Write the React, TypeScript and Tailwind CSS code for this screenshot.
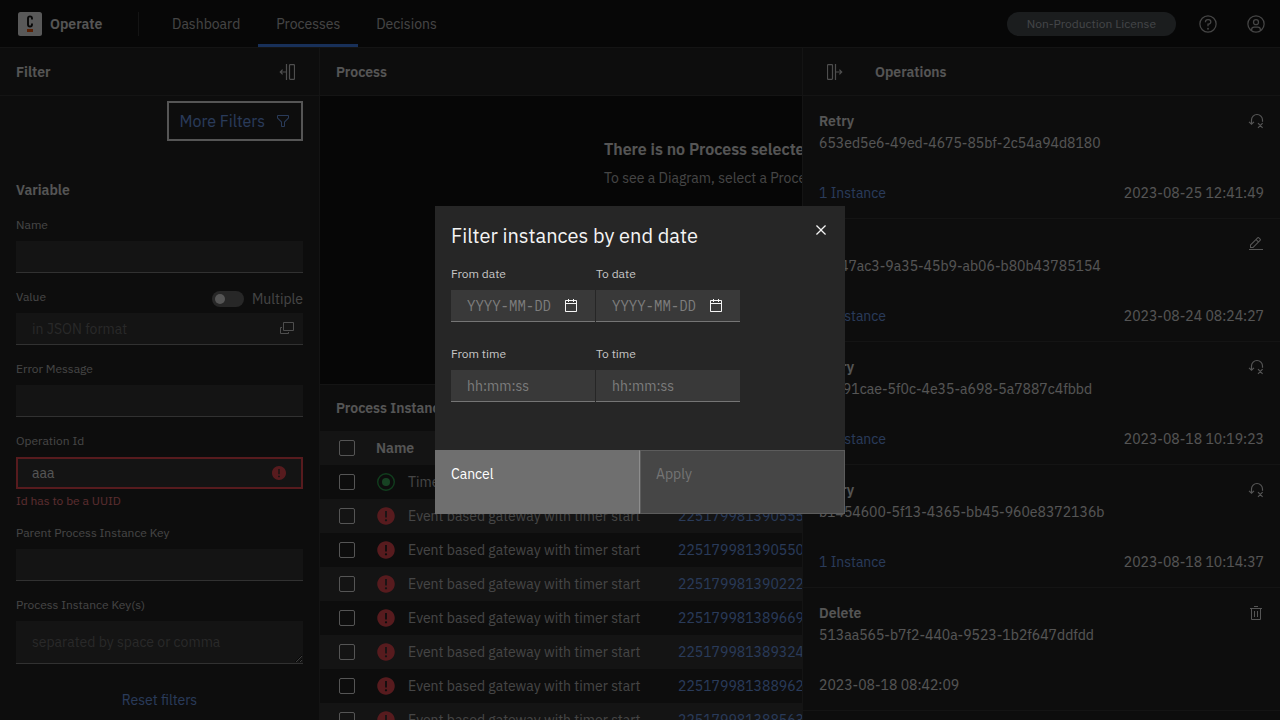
import type { ReactNode } from "react";

type IconProps = { className?: string };

function CloseIcon({ className }: IconProps) {
  return (
    <svg className={className} viewBox="0 0 32 32" fill="currentColor" aria-hidden="true">
      <path d="M17.4141 16 24 9.4141 22.5859 8 16 14.5859 9.4143 8 8 9.4141 14.5859 16 8 22.5859 9.4143 24 16 17.4141 22.5859 24 24 22.5859 17.4141 16z" />
    </svg>
  );
}

function CalendarIcon({ className }: IconProps) {
  return (
    <svg className={className} viewBox="0 0 32 32" fill="currentColor" aria-hidden="true">
      <path d="M26,4h-4V2h-2v2h-8V2h-2v2H6C4.9,4,4,4.9,4,6v20c0,1.1,0.9,2,2,2h20c1.1,0,2-0.9,2-2V6C28,4.9,27.1,4,26,4z M26,26H6V12h20V26z M26,10H6V6h4v2h2V6h8v2h2V6h4V10z" />
    </svg>
  );
}

function FilterIcon({ className }: IconProps) {
  return (
    <svg className={className} viewBox="0 0 32 32" fill="currentColor" aria-hidden="true">
      <path d="M18,28H14a2,2,0,0,1-2-2V18.41L4.59,11A2,2,0,0,1,4,9.59V6A2,2,0,0,1,6,4H26a2,2,0,0,1,2,2V9.59A2,2,0,0,1,27.41,11L20,18.41V26A2,2,0,0,1,18,28ZM6,6V9.59l8,8V26h4V17.59l8-8V6Z" />
    </svg>
  );
}

function HelpIcon({ className }: IconProps) {
  return (
    <svg className={className} viewBox="0 0 32 32" fill="currentColor" aria-hidden="true">
      <path d="M16,2A14,14,0,1,0,30,16,14,14,0,0,0,16,2Zm0,26A12,12,0,1,1,28,16,12,12,0,0,1,16,28Z" />
      <circle cx="16" cy="23.5" r="1.5" />
      <path d="M17,8H15.5A4.49,4.49,0,0,0,11,12.5V13h2v-.5A2.5,2.5,0,0,1,15.5,10H17a2.5,2.5,0,0,1,0,5H15v4.5h2V17a4.5,4.5,0,0,0,0-9Z" />
    </svg>
  );
}

function UserIcon({ className }: IconProps) {
  return (
    <svg className={className} viewBox="0 0 32 32" fill="currentColor" aria-hidden="true">
      <path d="M16,8a5,5,0,1,0,5,5A5,5,0,0,0,16,8Zm0,8a3,3,0,1,1,3-3A3.0034,3.0034,0,0,1,16,16Z" />
      <path d="M16,2A14,14,0,1,0,30,16,14.0158,14.0158,0,0,0,16,2ZM10,26.3765V25a3.0033,3.0033,0,0,1,3-3h6a3.0033,3.0033,0,0,1,3,3v1.3765a11.8989,11.8989,0,0,1-12,0Zm13.9925-1.4507A5.0016,5.0016,0,0,0,19,20H13a5.0016,5.0016,0,0,0-4.9925,4.9258,12,12,0,1,1,15.985,0Z" />
    </svg>
  );
}

function EditIcon({ className }: IconProps) {
  return (
    <svg className={className} viewBox="0 0 32 32" fill="currentColor" aria-hidden="true">
      <path d="M2 26H30V28H2z" />
      <path d="M25.4,9c0.8-0.8,0.8-2,0-2.8c0,0,0,0,0,0l-3.6-3.6c-0.8-0.8-2-0.8-2.8,0c0,0,0,0,0,0l-15,15V24h6.4L25.4,9z M20.4,4L24,7.6l-3,3L17.4,7L20.4,4z M6,22v-3.6l10-10l3.6,3.6l-10,10H6z" />
    </svg>
  );
}

function TrashIcon({ className }: IconProps) {
  return (
    <svg className={className} viewBox="0 0 32 32" fill="currentColor" aria-hidden="true">
      <path d="M12 12H14V24H12zM18 12H20V24H18zM4 6V8H6V28a2 2 0 0 0 2 2H24a2 2 0 0 0 2-2V8h2V6ZM8 28V8H24V28ZM12 2H20V4H12z" />
    </svg>
  );
}

function RetryIcon({ className }: IconProps) {
  return (
    <svg className={className} viewBox="0 0 16 16" fill="none" stroke="currentColor" strokeWidth="1.15" aria-hidden="true">
      <path d="M3.5 11V7A5.5 5.5 0 0 1 14.5 7V8.8" />
      <path d="M1 8.8 3.5 11.2 6 8.8M10 10.2l4.6 4.6M14.6 10.2 10 14.8" />
    </svg>
  );
}

function CollapseIcon({ className }: IconProps) {
  return (
    <svg className={className} viewBox="0 0 16 16" fill="none" stroke="currentColor" strokeWidth="1.2" aria-hidden="true">
      <path d="M7.5 0v16M7.5 8H1.5M3.6 5.7 1.3 8l2.3 2.3" />
      <rect x="10.5" y="0.6" width="5" height="14.8" rx="0.8" />
    </svg>
  );
}

function PopupIcon({ className }: IconProps) {
  return (
    <svg className={className} viewBox="0 0 16 16" fill="none" stroke="currentColor" aria-hidden="true">
      <path d="M4.5 1.5h10v8h-10zM3 6.5H1.5v6h8V11" />
    </svg>
  );
}

function ErrorIcon({ className }: IconProps) {
  return (
    <svg className={className} viewBox="0 0 16 16" fill="currentColor" fillRule="evenodd" aria-hidden="true">
      <path d="M8,1C4.2,1,1,4.2,1,8s3.2,7,7,7s7-3.1,7-7S11.8,1,8,1z M7.3,4h1.4v5.2h-1.4z M8,12.3c-0.5,0-0.9-0.4-0.9-0.9s0.4-0.9,0.9-0.9c0.5,0,0.9,0.4,0.9,0.9S8.5,12.3,8,12.3z" />
    </svg>
  );
}

function ActiveIcon({ className }: IconProps) {
  return (
    <svg className={className} viewBox="0 0 20 20" aria-hidden="true">
      <circle cx="10" cy="10" r="8.3" fill="none" stroke="#30b054" strokeWidth="1.4" />
      <circle cx="10" cy="10" r="4" fill="#42be65" />
    </svg>
  );
}

function Logo() {
  return (
    <svg className="size-6" viewBox="0 0 24 24" aria-hidden="true">
      <rect width="24" height="24" rx="2.5" fill="#ffffff" />
      <path d="M14 7.6V6.4a2 2 0 0 0-4 0v6.2a2 2 0 0 0 4 0v-1.2" fill="none" stroke="#161616" strokeWidth="1.9" />
      <rect x="9" y="17" width="6" height="3" fill="#fc5d0d" />
    </svg>
  );
}

const fieldClass = "block h-8 w-full border-b border-[#8d8d8d] bg-[#393939] px-4 text-sm text-[#f4f4f4] outline-none placeholder:text-[#757575]";
const labelClass = "block text-xs leading-4 text-[#c6c6c6]";

function Field({ id, label }: { id: string; label: string }) {
  return (
    <div className="flex flex-col gap-2">
      <label htmlFor={id} className={labelClass}>{label}</label>
      <input id={id} type="text" className={fieldClass} />
    </div>
  );
}

function Header() {
  const links = [
    { label: "Dashboard", active: false },
    { label: "Processes", active: true },
    { label: "Decisions", active: false },
  ];
  return (
    <header className="flex h-12 shrink-0 items-center border-b border-[#393939] bg-[#161616]">
      <a href="#home" className="flex w-[138px] items-center gap-2 pl-[18px] text-sm font-semibold">
        <Logo />
        Operate
      </a>
      <nav className="flex h-full items-center">
        <div className="mr-[15px] h-6 w-px bg-[#393939]" />
        {links.map(({ label, active }) => (
          <a
            key={label}
            href={`#${label.toLowerCase()}`}
            className={`flex h-full items-center border-y-[3px] border-t-transparent px-[18px] text-sm text-[#c6c6c6] ${active ? "border-b-[#4589ff]" : "border-b-transparent"}`}
          >
            {label}
          </a>
        ))}
      </nav>
      <div className="ml-auto flex items-center">
        <span className="mr-2 flex h-6 items-center rounded-full bg-[#4d5358] px-5 text-xs text-[#c1c7cd]">Non-Production License</span>
        <button type="button" aria-label="Help" className="grid size-12 place-items-center text-[#c6c6c6]"><HelpIcon className="size-5" /></button>
        <button type="button" aria-label="Account" className="grid size-12 place-items-center text-[#c6c6c6]"><UserIcon className="size-5" /></button>
      </div>
    </header>
  );
}

function FilterPanel() {
  return (
    <aside className="flex w-80 shrink-0 flex-col overflow-hidden border-r border-[#393939]">
      <div className="flex h-12 shrink-0 items-center justify-between border-b border-[#393939] pl-4 pr-6">
        <h2 className="text-sm font-semibold">Filter</h2>
        <button type="button" aria-label="Collapse filter" className="text-[#e0e0e0]"><CollapseIcon className="size-4" /></button>
      </div>
      <form className="flex flex-col px-4 pt-[5px]">
        <button type="button" className="flex h-10 items-center gap-2.5 self-end border-2 border-[#f4f4f4] px-2.5 text-base text-[#78a9ff]">
          More Filters
          <FilterIcon className="size-4" />
        </button>
        <h3 className="mt-10 text-sm leading-[18px] font-semibold">Variable</h3>
        <div className="mt-[18px] flex flex-col gap-4">
          <Field id="name" label="Name" />
          <div className="flex flex-col gap-2">
            <div className="flex h-4 items-center justify-between">
              <label htmlFor="value" className={labelClass}>Value</label>
              <label className="flex items-center gap-2 pt-1 text-sm text-[#c6c6c6]">
                <input
                  type="checkbox"
                  role="switch"
                  className="h-4 w-8 appearance-none rounded-full bg-[#6f6f6f] before:m-[3px] before:block before:size-[10px] before:rounded-full before:bg-[#f4f4f4]"
                />
                Multiple
              </label>
            </div>
            <div className="flex h-8 items-center border-b border-[#8d8d8d] bg-[#393939] pl-4 pr-2">
              <input id="value" type="text" placeholder="in JSON format" className="min-w-0 flex-1 bg-transparent text-sm outline-none placeholder:text-[#757575]" />
              <button type="button" aria-label="Open editor" className="text-[#e0e0e0]"><PopupIcon className="size-4" /></button>
            </div>
          </div>
          <Field id="error-message" label="Error Message" />
          <div className="flex flex-col">
            <label htmlFor="operation-id" className={labelClass}>Operation Id</label>
            <div className="mt-2 flex h-8 items-center border-2 border-[#fa4d56] bg-[#393939] px-[14px]">
              <input id="operation-id" type="text" defaultValue="aaa" aria-invalid="true" aria-describedby="operation-id-error" className="min-w-0 flex-1 bg-transparent text-sm outline-none" />
              <ErrorIcon className="size-4 text-[#fa4d56]" />
            </div>
            <p id="operation-id-error" className="mt-1 text-xs leading-4 text-[#ff8389]">Id has to be a UUID</p>
          </div>
          <Field id="parent-key" label="Parent Process Instance Key" />
          <div className="flex flex-col gap-2">
            <label htmlFor="instance-keys" className={labelClass}>Process Instance Key(s)</label>
            <textarea
              id="instance-keys"
              rows={1}
              placeholder="separated by space or comma"
              className="block h-[43px] w-full border-b border-[#8d8d8d] bg-[#393939] px-4 py-[11px] text-sm outline-none placeholder:text-[#757575]"
            />
          </div>
        </div>
        <button type="reset" className="mt-[26px] self-center text-sm text-[#78a9ff]">Reset filters</button>
      </form>
    </aside>
  );
}

const instances = [
  { name: "Timer start process", key: "2251799813905561", incident: false },
  { name: "Event based gateway with timer start", key: "2251799813905551", incident: true },
  { name: "Event based gateway with timer start", key: "2251799813905508", incident: true },
  { name: "Event based gateway with timer start", key: "2251799813902229", incident: true },
  { name: "Event based gateway with timer start", key: "2251799813896694", incident: true },
  { name: "Event based gateway with timer start", key: "2251799813893246", incident: true },
  { name: "Event based gateway with timer start", key: "2251799813889623", incident: true },
  { name: "Event based gateway with timer start", key: "2251799813885637", incident: true },
];

const checkboxClass = "block size-4 appearance-none rounded-[2px] border border-[#f4f4f4]";

function InstancesTable() {
  return (
    <table className="w-full table-fixed border-collapse text-left text-sm">
      <colgroup>
        <col className="w-14" />
        <col className="w-[302px]" />
        <col />
      </colgroup>
      <thead>
        <tr className="h-[34px] border-b border-[#262626] bg-[#393939]">
          <th className="pl-[19px]"><input type="checkbox" aria-label="Select all instances" className={checkboxClass} /></th>
          <th className="font-semibold">Name</th>
          <th className="font-semibold">Process Instance Key</th>
        </tr>
      </thead>
      <tbody className="text-[#c6c6c6]">
        {instances.map(({ name, key, incident }) => (
          <tr key={key} className="h-[34px] even:bg-[#393939]">
            <td className="pl-[19px]"><input type="checkbox" aria-label={`Select instance ${key}`} className={checkboxClass} /></td>
            <td>
              <div className="flex items-center gap-3 whitespace-nowrap">
                {incident ? <ErrorIcon className="size-5 text-[#fa4d56]" /> : <ActiveIcon className="size-5" />}
                {name}
              </div>
            </td>
            <td><a href={`#instance-${key}`} className="text-[#78a9ff]">{key}</a></td>
          </tr>
        ))}
      </tbody>
    </table>
  );
}

function ProcessArea() {
  return (
    <main className="flex min-w-0 flex-1 flex-col overflow-hidden">
      <div className="flex h-12 shrink-0 items-center border-b border-[#393939] px-4">
        <h2 className="text-sm font-semibold">Process</h2>
      </div>
      <section className="h-72 shrink-0 bg-[#121212] pt-[41px]">
        <div className="mx-auto w-[392px]">
          <h3 className="text-base leading-6 font-semibold">There is no Process selected</h3>
          <p className="mt-2 text-sm leading-[18px] text-[#c6c6c6]">To see a Diagram, select a Process in the Filters panel</p>
        </div>
      </section>
      <section className="border-t border-[#393939]">
        <div className="flex h-[46px] items-center px-4">
          <h2 className="text-sm font-semibold">Process Instances</h2>
        </div>
        <InstancesTable />
      </section>
    </main>
  );
}

type Operation = { type: string; id: string; date: string; icon: ReactNode; link?: string };

const operations: Operation[] = [
  { type: "Retry", id: "653ed5e6-49ed-4675-85bf-2c54a94d8180", date: "2023-08-25 12:41:49", icon: <RetryIcon className="size-4" />, link: "1 Instance" },
  { type: "Edit", id: "df547ac3-9a35-45b9-ab06-b80b43785154", date: "2023-08-24 08:24:27", icon: <EditIcon className="size-4" />, link: "1 Instance" },
  { type: "Retry", id: "9c891cae-5f0c-4e35-a698-5a7887c4fbbd", date: "2023-08-18 10:19:23", icon: <RetryIcon className="size-4" />, link: "1 Instance" },
  { type: "Retry", id: "b1454600-5f13-4365-bb45-960e8372136b", date: "2023-08-18 10:14:37", icon: <RetryIcon className="size-4" />, link: "1 Instance" },
  { type: "Delete", id: "513aa565-b7f2-440a-9523-1b2f647ddfdd", date: "2023-08-18 08:42:09", icon: <TrashIcon className="size-4" /> },
];

function OperationsPanel() {
  return (
    <aside className="absolute inset-y-0 right-0 w-[478px] overflow-hidden border-l border-[#393939] bg-[#262626]">
      <div className="flex h-12 items-center gap-8 border-b border-[#393939] pl-6">
        <button type="button" aria-label="Collapse operations" className="text-[#e0e0e0]"><CollapseIcon className="size-4 rotate-180" /></button>
        <h2 className="text-sm font-semibold">Operations</h2>
      </div>
      <ul className="text-sm leading-[18px] text-[#f4f4f4]">
        {operations.map(({ type, id, date, icon, link }) => (
          <li key={id} className="flex flex-col border-b border-[#393939] p-4">
            <div className="flex items-center justify-between">
              <h3 className="font-semibold">{type}</h3>
              <span>{icon}</span>
            </div>
            <p className="mt-1">{id}</p>
            <div className="mt-8 flex justify-between">
              {link && <a href={`#operation-${id}`} className="text-[#78a9ff]">{link}</a>}
              <time>{date}</time>
            </div>
          </li>
        ))}
      </ul>
    </aside>
  );
}

const modalFieldClass = "flex h-8 items-center border-b border-[#757575] bg-[#393939] px-4";
const modalInputClass = "w-full min-w-0 flex-1 bg-transparent text-sm outline-none placeholder:text-[#7d7d7d]";

function DateField({ id, label }: { id: string; label: string }) {
  return (
    <div className="flex flex-col gap-2">
      <label htmlFor={id} className={labelClass}>{label}</label>
      <div className={modalFieldClass}>
        <input id={id} type="text" placeholder="YYYY-MM-DD" className={`${modalInputClass} font-['IBM_Plex_Mono','Liberation_Mono',monospace]`} />
        <CalendarIcon className="size-4 shrink-0" />
      </div>
    </div>
  );
}

function TimeField({ id, label }: { id: string; label: string }) {
  return (
    <div className="flex flex-col gap-2">
      <label htmlFor={id} className={labelClass}>{label}</label>
      <div className={modalFieldClass}>
        <input id={id} type="text" placeholder="hh:mm:ss" className={modalInputClass} />
      </div>
    </div>
  );
}

function DateFilterDialog() {
  return (
    <div className="fixed inset-0 z-10 grid place-items-center bg-black/65">
      <div role="dialog" aria-modal="true" aria-labelledby="dialog-title" className="w-[410px] bg-[#262626]">
        <div className="flex items-start justify-between pl-4">
          <h2 id="dialog-title" className="pt-4 text-xl leading-7">Filter instances by end date</h2>
          <button type="button" aria-label="Close" className="grid size-12 place-items-center"><CloseIcon className="size-5" /></button>
        </div>
        <div className="grid grid-cols-[144px_144px] gap-x-px gap-y-6 px-4 pt-3 pb-12">
          <DateField id="from-date" label="From date" />
          <DateField id="to-date" label="To date" />
          <TimeField id="from-time" label="From time" />
          <TimeField id="to-time" label="To time" />
        </div>
        <div className="grid h-16 grid-cols-2 text-sm leading-[18px]">
          <button type="button" className="flex items-start border border-[#6f6f6f] border-r-[#8d8d8d] bg-[#6f6f6f] px-[15px] pt-[14px] text-white">Cancel</button>
          <button type="button" disabled className="flex items-start border border-[#5c5c5c] bg-[#464646] px-[15px] pt-[14px] text-[#757575]">Apply</button>
        </div>
      </div>
    </div>
  );
}

export default function App() {
  return (
    <div className="flex h-screen flex-col overflow-hidden bg-[#262626] font-['IBM_Plex_Sans','Inter',sans-serif] text-[#f4f4f4]">
      <Header />
      <div className="relative flex min-h-0 flex-1">
        <FilterPanel />
        <ProcessArea />
        <OperationsPanel />
      </div>
      <DateFilterDialog />
    </div>
  );
}
